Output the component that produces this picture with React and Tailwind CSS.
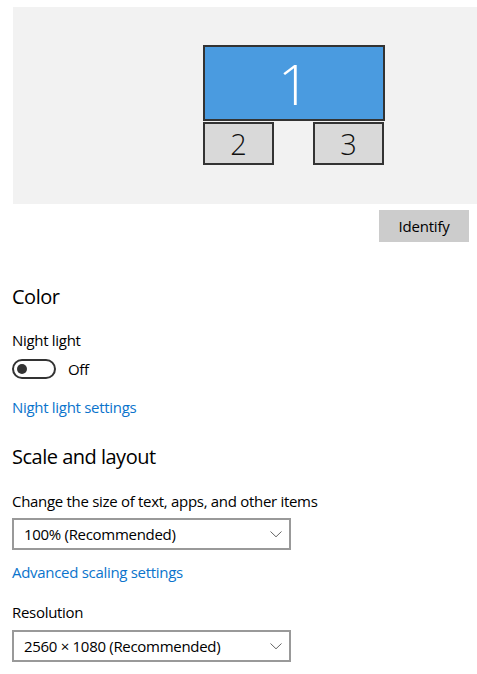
import React from "react";

function Chevron() {
  return (
    <svg width="12" height="7" viewBox="0 0 12 7" className="shrink-0">
      <path d="M0.5 0.5 L6 5.8 L11.5 0.5" fill="none" stroke="#666" strokeWidth="1" />
    </svg>
  );
}

function Dropdown({ children }) {
  return (
    <div className="flex h-[32px] w-[279px] items-center justify-between border-2 border-[#999999] pl-[10px] pr-[7px] text-[15px] leading-[20px] tracking-[-0.3px] text-black">
      <span>{children}</span>
      <Chevron />
    </div>
  );
}

export default function App() {
  return (
    <div
      className="min-h-[674px] w-[477px] bg-white text-black"
      style={{ fontFamily: '"Segoe UI", "Open Sans", "Noto Sans", sans-serif' }}
    >
      <div className="pt-[7px] pl-[13px]">
        <div className="relative h-[197px] bg-[#f2f2f2]">
          <div className="absolute left-[190px] top-[38px] flex h-[76px] w-[182px] items-center justify-center border-2 border-[#333333] bg-[#4a9be0]">
            <span className="text-[56px] font-light leading-none text-white">1</span>
          </div>
          <div className="absolute left-[190px] top-[115px] flex h-[43px] w-[71px] items-center justify-center border-2 border-[#333333] bg-[#d9d9d9]">
            <span className="text-[29px] font-light leading-none text-[#111]">2</span>
          </div>
          <div className="absolute left-[300px] top-[115px] flex h-[43px] w-[71px] items-center justify-center border-2 border-[#333333] bg-[#d9d9d9]">
            <span className="text-[29px] font-light leading-none text-[#111]">3</span>
          </div>
        </div>
      </div>

      <div className="flex justify-end pr-[8px] pt-[6px]">
        <div className="flex h-[32px] w-[90px] items-center justify-center bg-[#cccccc] text-[15px] leading-[20px] tracking-[-0.2px]">
          Identify
        </div>
      </div>

      <div className="pl-[12px] text-[15px] leading-[20px] tracking-[-0.3px]">
        <div className="mt-[41px] h-[28px] text-[20px] leading-[28px] tracking-[-0.5px]">Color</div>
        <div className="mt-[19px] h-[20px]">Night light</div>
        <div className="mt-[9px] flex h-[20px] items-center gap-[12px]">
          <div className="flex h-[20px] w-[44px] items-center rounded-full border-2 border-[#333333] pl-[3px]">
            <div className="h-[10px] w-[10px] rounded-full bg-[#333333]" />
          </div>
          <span>Off</span>
        </div>
        <div className="mt-[18px] h-[20px] text-[#0b74cc]">Night light settings</div>

        <div className="mt-[26px] h-[28px] text-[20px] leading-[28px] tracking-[-0.5px]">Scale and layout</div>
        <div className="mt-[20px] h-[20px]">Change the size of text, apps, and other items</div>
        <div className="mt-[7px]">
          <Dropdown>100% (Recommended)</Dropdown>
        </div>
        <div className="mt-[12px] h-[20px] text-[#0b74cc]">Advanced scaling settings</div>
        <div className="mt-[20px] h-[20px]">Resolution</div>
        <div className="mt-[8px]">
          <Dropdown>2560 × 1080 (Recommended)</Dropdown>
        </div>
      </div>
    </div>
  );
}
